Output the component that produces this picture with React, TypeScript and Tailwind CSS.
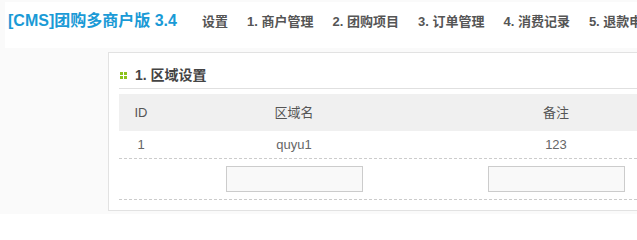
import React from "react";

const navItems = ["设置", "1. 商户管理", "2. 团购项目", "3. 订单管理", "4. 消费记录", "5. 退款申请"];

const rows = [{ id: "1", name: "quyu1", note: "123" }];

export default function App() {
  return (
    <div
      className="h-[214px] w-full overflow-hidden bg-[#fafafa] pt-[2px]"
      style={{ fontFamily: '"Liberation Sans", "Noto Sans CJK SC", sans-serif' }}
    >
      {/* top bar */}
      <div className="ml-[5px] h-[46px] bg-white pl-[3px] pt-[9px] flex items-baseline whitespace-nowrap overflow-hidden">
        <div className="w-[194px] shrink-0 text-[16px] leading-[20px] font-bold text-[#1a9ad6]">
          [CMS]团购多商户版 3.4
        </div>
        <div className="flex gap-[19px] text-[13px] leading-[20px] font-bold text-[#555] pt-[1px]">
          {navItems.map((item) => (
            <span key={item} className="shrink-0">{item}</span>
          ))}
        </div>
      </div>

      {/* content */}
      <div className="pl-[108px] pt-[4px]">
        <div className="w-[580px] border border-[#e2e2e2] bg-white px-[10px] pb-[10px]">
          <div className="flex items-center pt-[12px] pb-[3px] border-b border-[#e0e0e0] h-[36px]">
            <div className="ml-[1px] grid grid-cols-2 gap-[1px] w-[7px] h-[7px]">
              <span className="bg-[#8cc21b]" />
              <span className="bg-[#8cc21b]" />
              <span className="bg-[#8cc21b]" />
              <span className="bg-[#8cc21b]" />
            </div>
            <h3 className="ml-[8px] text-[14px] leading-[20px] font-bold text-[#444]">1. 区域设置</h3>
          </div>

          <div className="mt-[5px] text-[13px] text-[#666]">
            <div className="grid grid-cols-[44px_262px_262px_1fr] h-[37px] items-center bg-[#f0f0f0] text-[#555]">
              <div className="text-center">ID</div>
              <div className="text-center">区域名</div>
              <div className="text-center">备注</div>
              <div />
            </div>
            {rows.map((r) => (
              <div
                key={r.id}
                className="grid grid-cols-[44px_262px_262px_1fr] h-[28px] items-center border-b border-dashed border-[#cccccc]"
              >
                <div className="text-center">{r.id}</div>
                <div className="text-center">{r.name}</div>
                <div className="text-center">{r.note}</div>
                <div />
              </div>
            ))}
            <div className="grid grid-cols-[44px_262px_262px_1fr] h-[41px] items-center border-b border-dashed border-[#cccccc]">
              <div />
              <div className="flex justify-center">
                <input className="w-[137px] h-[26px] border border-[#cccccc] bg-[#f9f9f9] outline-none" />
              </div>
              <div className="flex justify-center">
                <input className="w-[137px] h-[26px] border border-[#cccccc] bg-[#f9f9f9] outline-none" />
              </div>
              <div />
            </div>
          </div>
        </div>
      </div>
    </div>
  );
}
